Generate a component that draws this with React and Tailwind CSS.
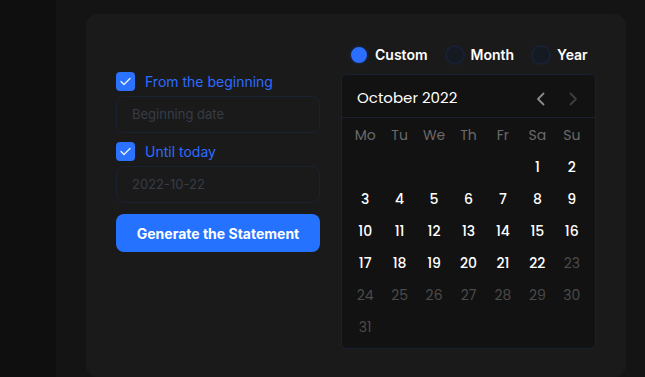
import React from "react";

const days = ["Mo", "Tu", "We", "Th", "Fr", "Sa", "Su"];

function Check() {
  return (
    <div className="w-[19px] h-[19px] rounded-[4px] bg-[#2a72ff] flex items-center justify-center">
      <svg width="11" height="9" viewBox="0 0 11 9" fill="none">
        <path d="M1 4.5 L4 7.5 L10 1.5" stroke="#e8efff" strokeWidth="1.4" strokeLinecap="round" strokeLinejoin="round" />
      </svg>
    </div>
  );
}

function Radio({ on, label }) {
  return (
    <div className="flex items-center gap-[6px]">
      <div className={"w-[20px] h-[20px] rounded-full border-2 border-[#182033] " + (on ? "bg-[#2a6fff]" : "bg-[#151a22]")} />
      <span className="text-[14px] font-semibold text-white leading-none">{label}</span>
    </div>
  );
}

export default function App() {
  const cells = [];
  for (let i = 0; i < 5; i++) cells.push({ n: "", s: 0 });
  for (let d = 1; d <= 31; d++) cells.push({ n: String(d), s: d <= 22 ? 1 : 2 });
  return (
    <div className="flex w-[645px] h-[377px] overflow-hidden bg-[#141414]" style={{ fontFamily: "Inter, 'Liberation Sans', sans-serif" }}>
      <div className="w-[56px] h-full bg-[#0f0f0f] shrink-0" />
      <div className="pl-[30px] pt-[14px] shrink-0">
        <div className="w-[540px] h-[363px] rounded-[12px] bg-[#1a1a1a] px-[30px] pt-[30px] flex gap-[21px]">
          <div className="w-[204px] mt-[28px] flex flex-col">
            <div className="flex items-center gap-[10px] h-[19px]">
              <Check />
              <span className="text-[14px] text-[#2f6bff]">From the beginning</span>
            </div>
            <div className="mt-[5px] h-[37px] rounded-[8px] border border-[#1a2131] flex items-center pl-[15px] text-[13px] text-[#373c47]">
              Beginning date
            </div>
            <div className="mt-[9px] flex items-center gap-[10px] h-[19px]">
              <Check />
              <span className="text-[14px] text-[#2f6bff]">Until today</span>
            </div>
            <div className="mt-[5px] h-[37px] rounded-[8px] border border-[#1a2131] flex items-center pl-[15px] text-[13px] text-[#373c47]">
              2022-10-22
            </div>
            <button className="mt-[11px] h-[38px] rounded-[8px] bg-[#2472ff] text-white text-[14px] font-bold">
              Generate the Statement
            </button>
          </div>
          <div className="w-[255px] flex flex-col">
            <div className="h-[20px] flex items-center gap-[17px] pl-[8px] mt-[1px]">
              <Radio on label="Custom" />
              <Radio label="Month" />
              <Radio label="Year" />
            </div>
            <div className="mt-[9px] h-[275px] rounded-[6px] border border-[#182133] bg-[#121212]" style={{ fontFamily: "Poppins, 'Open Sans', sans-serif" }}>
              <div className="h-[43px] border-b border-[#1a2232] flex items-center justify-between pl-[15px] pr-[16px] pt-[5px]">
                <span className="text-[15px] text-white">October 2022</span>
                <div className="flex items-center gap-[20px]">
                  <svg width="12" height="14" viewBox="0 0 12 14" fill="none">
                    <path d="M8.5 1.5 L3 7 L8.5 12.5" stroke="#8a8a8a" strokeWidth="1.8" strokeLinecap="round" strokeLinejoin="round" />
                  </svg>
                  <svg width="12" height="14" viewBox="0 0 12 14" fill="none">
                    <path d="M3.5 1.5 L9 7 L3.5 12.5" stroke="#3e3e3e" strokeWidth="1.8" strokeLinecap="round" strokeLinejoin="round" />
                  </svg>
                </div>
              </div>
              <div className="px-[6px] pt-[1px] grid grid-cols-7">
                {days.map((d) => (
                  <div key={d} className="h-[32px] flex items-center justify-center text-[14px] text-[#6a6a6a]">{d}</div>
                ))}
                {cells.map((c, i) => (
                  <div
                    key={i}
                    className={
                      "h-[32px] flex items-center justify-center text-[14px] " +
                      (c.s === 1 ? "text-white font-medium" : "text-[#4b4b4b]")
                    }
                  >
                    {c.n}
                  </div>
                ))}
              </div>
            </div>
          </div>
        </div>
      </div>
    </div>
  );
}
